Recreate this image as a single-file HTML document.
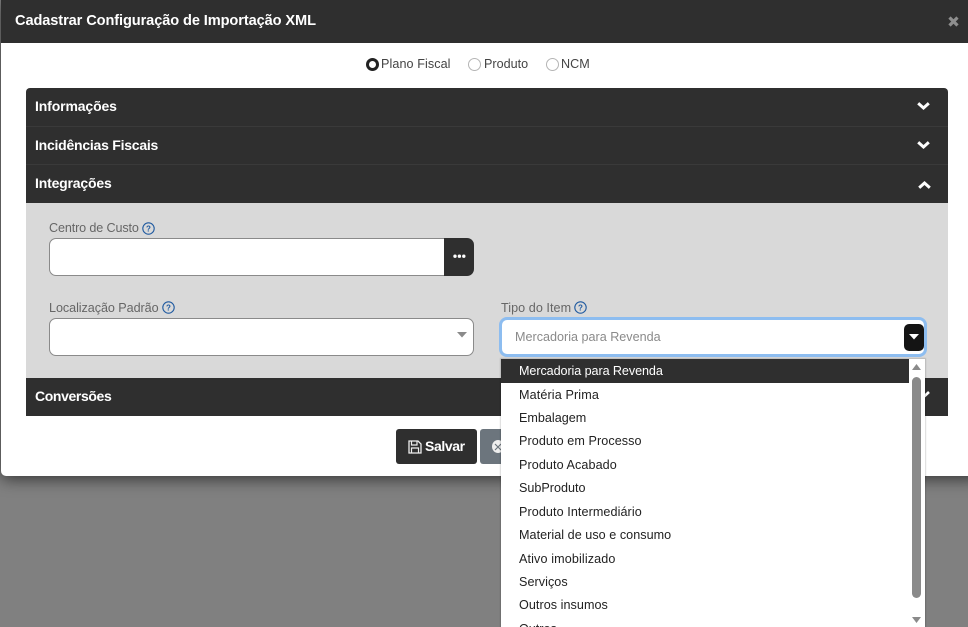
<!DOCTYPE html>
<html lang="pt-BR"><head><meta charset="utf-8"><title>Cadastrar Configuração de Importação XML</title>
<style>
html,body{margin:0;padding:0;width:968px;height:627px;overflow:hidden;background:#808080;font-family:"Liberation Sans",Arial,sans-serif}
*{box-sizing:border-box}
#w{position:absolute;left:0;top:0;width:968px;height:627px;overflow:hidden;background:#808080}
.a{position:absolute;white-space:nowrap}
.t{position:absolute;white-space:nowrap;line-height:20px;height:20px}
.modal{position:absolute;left:1px;top:0;width:980px;height:476px;background:#fff;border-radius:5px;box-shadow:0 3px 16px rgba(0,0,0,.6)}
.h{font-weight:bold;color:#fff;font-size:14px;letter-spacing:-.1px}
.lab{font-size:12.6px;color:#666}
.r{position:absolute;width:13px;height:13px;border-radius:50%;border:1px solid #b5b5b5;background:#fff}
.rl{font-size:12.6px;color:#444}
.opt{font-size:12.6px;color:#222;left:519px}
.q{position:absolute;width:13px;height:13px}
svg{position:absolute;overflow:visible}
</style></head><body><div id="w">
<div class="modal"></div>
<div class="a" style="left:1px;top:0;width:967px;height:43px;background:#2f2f2f"></div>
<div class="t h" style="left:15px;top:11px;font-size:14.6px;letter-spacing:-.1px">Cadastrar Configuração de Importação XML</div>
<svg style="left:948px;top:16px" width="11" height="11" viewBox="0 0 11 11"><path d="M1.5 1.5L9.5 9.5M9.5 1.5L1.5 9.5" stroke="#8e8e8e" stroke-width="3.2"/></svg>

<div class="r" style="left:366px;top:58px;border:3.5px solid #222"></div>
<div class="t rl" style="left:381px;top:54px;letter-spacing:.08px">Plano Fiscal</div>
<div class="r" style="left:468px;top:58px"></div>
<div class="t rl" style="left:484px;top:54px">Produto</div>
<div class="r" style="left:546px;top:58px"></div>
<div class="t rl" style="left:561px;top:54px">NCM</div>

<div class="a" style="left:26px;top:88px;width:922px;height:328px;background:#2f2f2f;border-radius:4px 4px 0 0"></div>
<div class="a" style="left:26px;top:126px;width:922px;height:1px;background:#3a3a3a"></div>
<div class="a" style="left:26px;top:164px;width:922px;height:1px;background:#3a3a3a"></div>
<div class="a" style="left:26px;top:203px;width:922px;height:175px;background:#d9d9d9"></div>
<div class="t h" style="left:35px;top:96px;letter-spacing:-.13px">Informações</div>
<div class="t h" style="left:35px;top:135px;letter-spacing:-.24px">Incidências Fiscais</div>
<div class="t h" style="left:35px;top:173px;letter-spacing:-.18px">Integrações</div>
<div class="t h" style="left:35px;top:386px;letter-spacing:-.38px">Conversões</div>
<svg style="left:917px;top:102px" width="13" height="8"><path d="M1.2 1.3L6.5 6L11.8 1.3" fill="none" stroke="#fff" stroke-width="3"/></svg>
<svg style="left:917px;top:141px" width="13" height="8"><path d="M1.2 1.3L6.5 6L11.8 1.3" fill="none" stroke="#fff" stroke-width="3"/></svg>
<svg style="left:918px;top:181px" width="13" height="8"><path d="M1.2 6.7L6.5 2L11.8 6.7" fill="none" stroke="#fff" stroke-width="3"/></svg>
<svg style="left:923px;top:391px" width="8" height="8"><path d="M0 6.5L6 1" fill="none" stroke="#fff" stroke-width="2.6"/></svg>

<div class="t lab" style="left:49px;top:218px;letter-spacing:-.13px">Centro de Custo</div>
<svg class="q" style="left:142px;top:222px" viewBox="0 0 13 13"><circle cx="6.5" cy="6.5" r="5.7" fill="none" stroke="#1f5aa0" stroke-width="1.1"/><text x="6.5" y="9.3" font-size="8" font-weight="bold" text-anchor="middle" fill="#1f5aa0" font-family="Liberation Sans">?</text></svg>
<div class="a" style="left:49px;top:238px;width:395px;height:38px;background:#fff;border:1px solid #8a8a8a;border-right:0;border-radius:7px 0 0 7px"></div>
<div class="a" style="left:444px;top:238px;width:30px;height:38px;background:#2f2f2f;border-radius:0 7px 7px 0"></div>
<svg style="left:453px;top:254px" width="13" height="5"><circle cx="2" cy="2.2" r="1.7" fill="#fff"/><circle cx="6.4" cy="2.2" r="1.7" fill="#fff"/><circle cx="10.8" cy="2.2" r="1.7" fill="#fff"/></svg>

<div class="t lab" style="left:49px;top:298px;letter-spacing:-.06px">Localização Padrão</div>
<svg class="q" style="left:162px;top:301px" viewBox="0 0 13 13"><circle cx="6.5" cy="6.5" r="5.7" fill="none" stroke="#1f5aa0" stroke-width="1.1"/><text x="6.5" y="9.3" font-size="8" font-weight="bold" text-anchor="middle" fill="#1f5aa0" font-family="Liberation Sans">?</text></svg>
<div class="a" style="left:49px;top:318px;width:425px;height:38px;background:#fff;border:1px solid #8a8a8a;border-radius:7px"></div>
<svg style="left:457px;top:332px" width="11" height="6"><path d="M0 0H10L5 5.5Z" fill="#8a8a8a"/></svg>

<div class="t lab" style="left:501px;top:298px;letter-spacing:.05px">Tipo do Item</div>
<svg class="q" style="left:574px;top:301px" viewBox="0 0 13 13"><circle cx="6.5" cy="6.5" r="5.7" fill="none" stroke="#1f5aa0" stroke-width="1.1"/><text x="6.5" y="9.3" font-size="8" font-weight="bold" text-anchor="middle" fill="#1f5aa0" font-family="Liberation Sans">?</text></svg>
<div class="a" style="left:499px;top:317px;width:428px;height:40px;background:#fff;border:3px solid #8dbdf0;border-radius:8px"></div>
<div class="t" style="left:515px;top:327px;font-size:12.6px;color:#8a8a8a">Mercadoria para Revenda</div>
<div class="a" style="left:904px;top:324px;width:20px;height:27px;background:#141414;border-radius:5px"></div>
<svg style="left:909px;top:334px" width="11" height="6"><path d="M0 0H10L5 5.5Z" fill="#fff"/></svg>

<div class="a" style="left:396px;top:429px;width:81px;height:35px;background:#2f2f2f;border-radius:3px"></div>
<svg style="left:408px;top:440px" width="14" height="14" viewBox="0 0 14 14"><path d="M1 1H10L13 4V13H1Z" fill="none" stroke="#eee" stroke-width="1.3"/><path d="M3.5 1V5H9V1" fill="none" stroke="#eee" stroke-width="1.2"/><path d="M3.5 13V8H10.5V13" fill="none" stroke="#eee" stroke-width="1.2"/></svg>
<div class="t h" style="left:425px;top:436px;letter-spacing:-.4px">Salvar</div>
<div class="a" style="left:480px;top:429px;width:30px;height:35px;background:#6c757d;border-radius:3px 0 0 3px"></div>
<div class="a" style="left:492px;top:440px;width:12px;height:13px;background:#eee;border-radius:50%"></div>
<svg style="left:495px;top:444px" width="6" height="6"><path d="M0 0L6 6M6 0L0 6" stroke="#6c757d" stroke-width="1.2"/></svg>

<div class="a" style="left:501px;top:359px;width:424px;height:290px;background:#fff;box-shadow:0 0 1px 1px rgba(0,0,0,.15)"></div>
<div class="a" style="left:501px;top:359px;width:408px;height:24px;background:#2f2f2f"></div>
<div class="t opt" style="top:361px;color:#fff;letter-spacing:-.08px">Mercadoria para Revenda</div>
<div class="t opt" style="top:385px;letter-spacing:.12px">Matéria Prima</div>
<div class="t opt" style="top:408px">Embalagem</div>
<div class="t opt" style="top:431px;letter-spacing:.08px">Produto em Processo</div>
<div class="t opt" style="top:455px;letter-spacing:.08px">Produto Acabado</div>
<div class="t opt" style="top:478px">SubProduto</div>
<div class="t opt" style="top:502px;letter-spacing:.08px">Produto Intermediário</div>
<div class="t opt" style="top:525px;letter-spacing:.04px">Material de uso e consumo</div>
<div class="t opt" style="top:549px;letter-spacing:.12px">Ativo imobilizado</div>
<div class="t opt" style="top:572px;letter-spacing:.05px">Serviços</div>
<div class="t opt" style="top:595px;letter-spacing:.05px">Outros insumos</div>
<div class="t opt" style="top:619px">Outros</div>
<div class="a" style="left:912px;top:377px;width:9px;height:221px;background:#8a8a8a;border-radius:5px"></div>
<svg style="left:912px;top:364px" width="9" height="6"><path d="M4.5 0L9 6H0Z" fill="#8a8a8a"/></svg>
<svg style="left:912px;top:617px" width="9" height="6"><path d="M0 0H9L4.5 6Z" fill="#8a8a8a"/></svg>
</div></body></html>
